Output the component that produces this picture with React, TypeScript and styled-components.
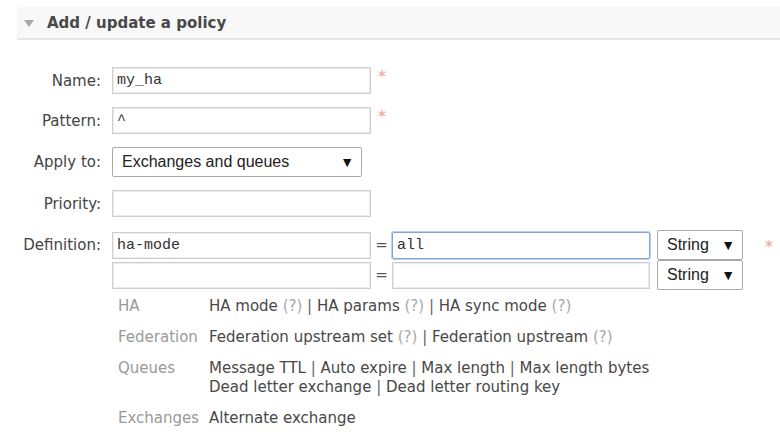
import React from "react";
import styled, { createGlobalStyle } from "styled-components";

const Global = createGlobalStyle`
  html, body { margin: 0; padding: 0; background: #fff; }
  body { font-family: "DejaVu Sans", Verdana, sans-serif; color: #484848; }
`;

const Page = styled.div`
  padding: 7px 0 0 17px;
  width: 763px;
`;

const Header = styled.div`
  display: flex;
  align-items: center;
  height: 31px;
  background: #f8f8f8;
  border-bottom: 2px solid #e6e6e6;
  padding-left: 7px;
`;

const Triangle = styled.span`
  width: 0;
  height: 0;
  border-left: 5.5px solid transparent;
  border-right: 5.5px solid transparent;
  border-top: 7px solid #aaa;
  margin-right: 13px;
  margin-top: 1px;
`;

const Title = styled.h2`
  margin: 0;
  font-size: 15px;
  font-weight: bold;
  color: #484848;
`;

const Form = styled.div`
  display: grid;
  grid-template-columns: 84px auto;
  column-gap: 11px;
  row-gap: 13px;
  align-items: center;
  margin-top: 27px;
`;

const Label = styled.label<{ $top?: boolean }>`
  text-align: right;
  font-size: 15px;
  color: #444;
  align-self: ${(p) => (p.$top ? "start" : "center")};
  padding-top: ${(p) => (p.$top ? "6px" : "0")};
`;

const Field = styled.div`
  display: flex;
  align-items: flex-start;
`;

const TextInput = styled.div<{ $w?: number; $focus?: boolean }>`
  box-sizing: border-box;
  width: ${(p) => p.$w ?? 259}px;
  height: 27px;
  border: 1px solid ${(p) => (p.$focus ? "#7ea6dd" : "#cfcfcf")};
  box-shadow: ${(p) => (p.$focus ? "0 0 0 1px #b9d0ef" : "inset 0 0 0 1px #ececec")};
  border-radius: ${(p) => (p.$focus ? "2px" : "0")};
  font-family: "Liberation Mono", monospace;
  font-size: 15px;
  color: #333;
  padding: 0 4px;
  display: flex;
  align-items: center;
`;

const Required = styled.span<{ $gap?: number }>`
  color: #f49a9a;
  font-size: 16px;
  margin-left: ${(p) => p.$gap ?? 7}px;
  margin-top: 2px;
  line-height: 15px;
`;

const Select = styled.div<{ $w: number }>`
  box-sizing: border-box;
  width: ${(p) => p.$w}px;
  height: 30px;
  border: 1px solid #a9a9a9;
  border-radius: 2px;
  background: #fff;
  display: flex;
  align-items: center;
  justify-content: space-between;
  padding: 0 7px 0 9px;
  font-family: "Liberation Sans", Arial, sans-serif;
  font-size: 16px;
  color: #222;
`;

const Arrow = styled.span`
  font-size: 14px;
  color: #111;
`;

const DefRows = styled.div`
  display: flex;
  flex-direction: column;
`;

const DefRow = styled.div`
  display: flex;
  align-items: center;
  height: 30px;
`;

const Eq = styled.span`
  width: 21px;
  text-align: center;
  font-size: 15px;
  color: #555;
`;

const Spacer = styled.span`
  width: 7px;
`;

const Help = styled.div`
  display: grid;
  grid-template-columns: 91px auto;
  row-gap: 12px;
  margin: 7px 0 0 101px;
  font-size: 15px;
  line-height: 19px;
`;

const Category = styled.div`
  color: #999;
`;

const Links = styled.div`
  color: #484848;
`;

const Q = styled.span`
  color: #a8a8a8;
`;

const Sep = styled.span`
  color: #666;
`;

const helpRows: { cat: string; lines: { text: string; q?: boolean }[][] }[] = [
  {
    cat: "HA",
    lines: [[{ text: "HA mode", q: true }, { text: "HA params", q: true }, { text: "HA sync mode", q: true }]],
  },
  {
    cat: "Federation",
    lines: [[{ text: "Federation upstream set", q: true }, { text: "Federation upstream", q: true }]],
  },
  {
    cat: "Queues",
    lines: [
      [{ text: "Message TTL" }, { text: "Auto expire" }, { text: "Max length" }, { text: "Max length bytes" }],
      [{ text: "Dead letter exchange" }, { text: "Dead letter routing key" }],
    ],
  },
  { cat: "Exchanges", lines: [[{ text: "Alternate exchange" }]] },
];

export default function App() {
  return (
    <Page>
      <Global />
      <Header>
        <Triangle />
        <Title>Add / update a policy</Title>
      </Header>
      <Form>
        <Label>Name:</Label>
        <Field>
          <TextInput>my_ha</TextInput>
          <Required>*</Required>
        </Field>
        <Label>Pattern:</Label>
        <Field>
          <TextInput>^</TextInput>
          <Required>*</Required>
        </Field>
        <Label>Apply to:</Label>
        <Field>
          <Select $w={250}>
            <span>Exchanges and queues</span>
            <Arrow>▼</Arrow>
          </Select>
        </Field>
        <Label>Priority:</Label>
        <Field>
          <TextInput />
        </Field>
        <Label $top>Definition:</Label>
        <DefRows>
          <DefRow>
            <TextInput>ha-mode</TextInput>
            <Eq>=</Eq>
            <TextInput $w={258} $focus>all</TextInput>
            <Spacer />
            <Select $w={86}>
              <span>String</span>
              <Arrow>▼</Arrow>
            </Select>
            <Required $gap={22}>*</Required>
          </DefRow>
          <DefRow>
            <TextInput />
            <Eq>=</Eq>
            <TextInput $w={258} />
            <Spacer />
            <Select $w={86}>
              <span>String</span>
              <Arrow>▼</Arrow>
            </Select>
          </DefRow>
        </DefRows>
      </Form>
      <Help>
        {helpRows.map((r) => (
          <React.Fragment key={r.cat}>
            <Category>{r.cat}</Category>
            <Links>
              {r.lines.map((line, li) => (
                <div key={li}>
                  {line.map((item, i) => (
                    <React.Fragment key={item.text}>
                      {i > 0 && <Sep> | </Sep>}
                      {item.text}
                      {item.q && <Q> (?)</Q>}
                    </React.Fragment>
                  ))}
                </div>
              ))}
            </Links>
          </React.Fragment>
        ))}
      </Help>
    </Page>
  );
}
